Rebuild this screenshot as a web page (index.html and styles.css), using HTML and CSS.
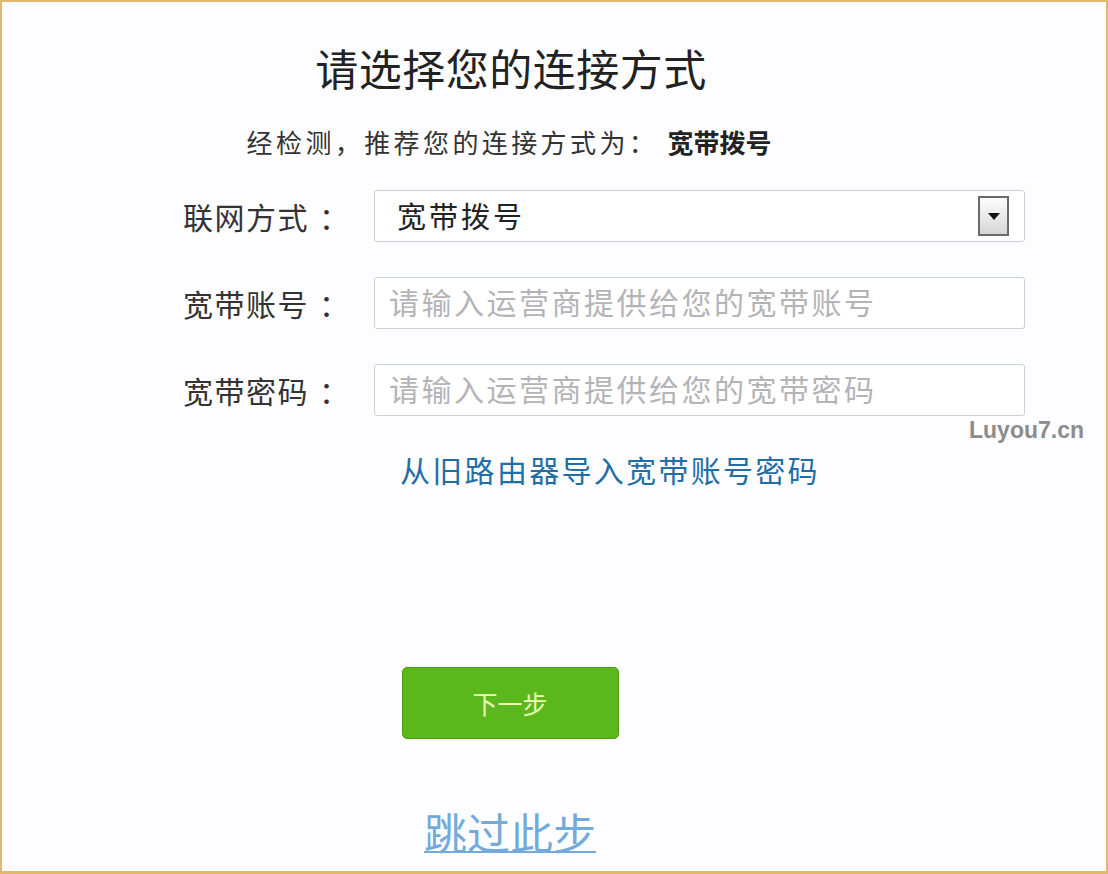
FILE: index.html
```html
<!DOCTYPE html>
<html lang="zh-CN">
<head>
  <meta charset="UTF-8" />
  <title>请选择您的连接方式</title>
  <link rel="stylesheet" href="styles.css">
</head>
<body>
  <div class="frame">
    <h1 class="title">请选择您的连接方式</h1>
    <p class="hint">经检测，推荐您的连接方式为： <strong>宽带拨号</strong></p>

    <div class="form">
      <div class="row">
        <label>联网方式<span class="colon">：</span></label>
        <div class="field select">
          <span>宽带拨号</span>
          <span class="drop"><i></i></span>
        </div>
      </div>
      <div class="row">
        <label>宽带账号<span class="colon">：</span></label>
        <input class="field" type="text" placeholder="请输入运营商提供给您的宽带账号" />
      </div>
      <div class="row">
        <label>宽带密码<span class="colon">：</span></label>
        <input class="field" type="text" placeholder="请输入运营商提供给您的宽带密码" />
      </div>
      <a class="import" href="#">从旧路由器导入宽带账号密码</a>
    </div>

    <div class="actions">
      <button class="next">下一步</button>
      <a class="skip" href="#">跳过此步</a>
    </div>

    <div class="mark">Luyou7.cn</div>
  </div>
</body>
</html>
```

FILE: styles.css
```css
body { margin:0; background:#fff; font-family:"Noto Sans CJK SC","Noto Sans",sans-serif; color:#333; }
.frame { position:relative; box-sizing:border-box; height:874px; border:2px solid #e4b86c; border-bottom-width:3px; background:#fdfdff; }

.title { width:1018px; margin:0; padding-top:40px; font-size:43px; line-height:50px; font-weight:normal; letter-spacing:0.5px; color:#222; text-align:center; }
.hint { width:1014px; margin:35px 0 0; font-size:26px; line-height:30px; letter-spacing:3.4px; text-align:center; color:#333; }
.hint strong { color:#222; letter-spacing:0; }

.form { margin-top:33px; padding-left:181px; }
.row { display:flex; align-items:center; height:52px; margin-bottom:35px; }
.row label { width:191px; font-size:30px; letter-spacing:1.5px; color:#333; }
.colon { margin-left:10px; }
.field { box-sizing:border-box; width:651px; height:52px; border:1px solid #cbd0d8; border-radius:3px; background:#fff; font-family:inherit; }
input.field { padding:0 14px 4px; font-size:30px; letter-spacing:2.5px; color:#333; }
input.field::placeholder { color:#b4b4b8; }
.select { display:flex; align-items:center; justify-content:space-between; padding:0 15px 2px 22px; font-size:29px; letter-spacing:3px; color:#222; }
.drop { box-sizing:border-box; display:flex; justify-content:center; width:31px; height:40px; margin-top:2px; padding-top:15px; border:2px solid #6a6a6a; background:linear-gradient(#fdfdfd,#d6d6d6); }
.drop i { width:0; height:0; border-left:6px solid transparent; border-right:6px solid transparent; border-top:7px solid #111; }

.import { display:block; margin:-2px 0 0 217px; font-size:30px; line-height:40px; color:#1f6ea8; text-decoration:none; letter-spacing:2.3px; }

.actions { width:1016px; display:flex; flex-direction:column; align-items:center; }
.next { width:217px; height:72px; margin-top:178px; border:1px solid #4c9c16; border-radius:5px; background:#5bb81c; color:#ecffb2; font-family:inherit; font-size:25px; cursor:pointer; }
.skip { margin-top:67px; font-size:43px; line-height:50px; color:#74aadb; text-decoration:underline; text-decoration-thickness:2px; }

.mark { position:absolute; left:967px; top:415px; font-family:"Liberation Sans",Arial,sans-serif; font-size:23px; font-weight:bold; color:#8c8c8c; }
```
